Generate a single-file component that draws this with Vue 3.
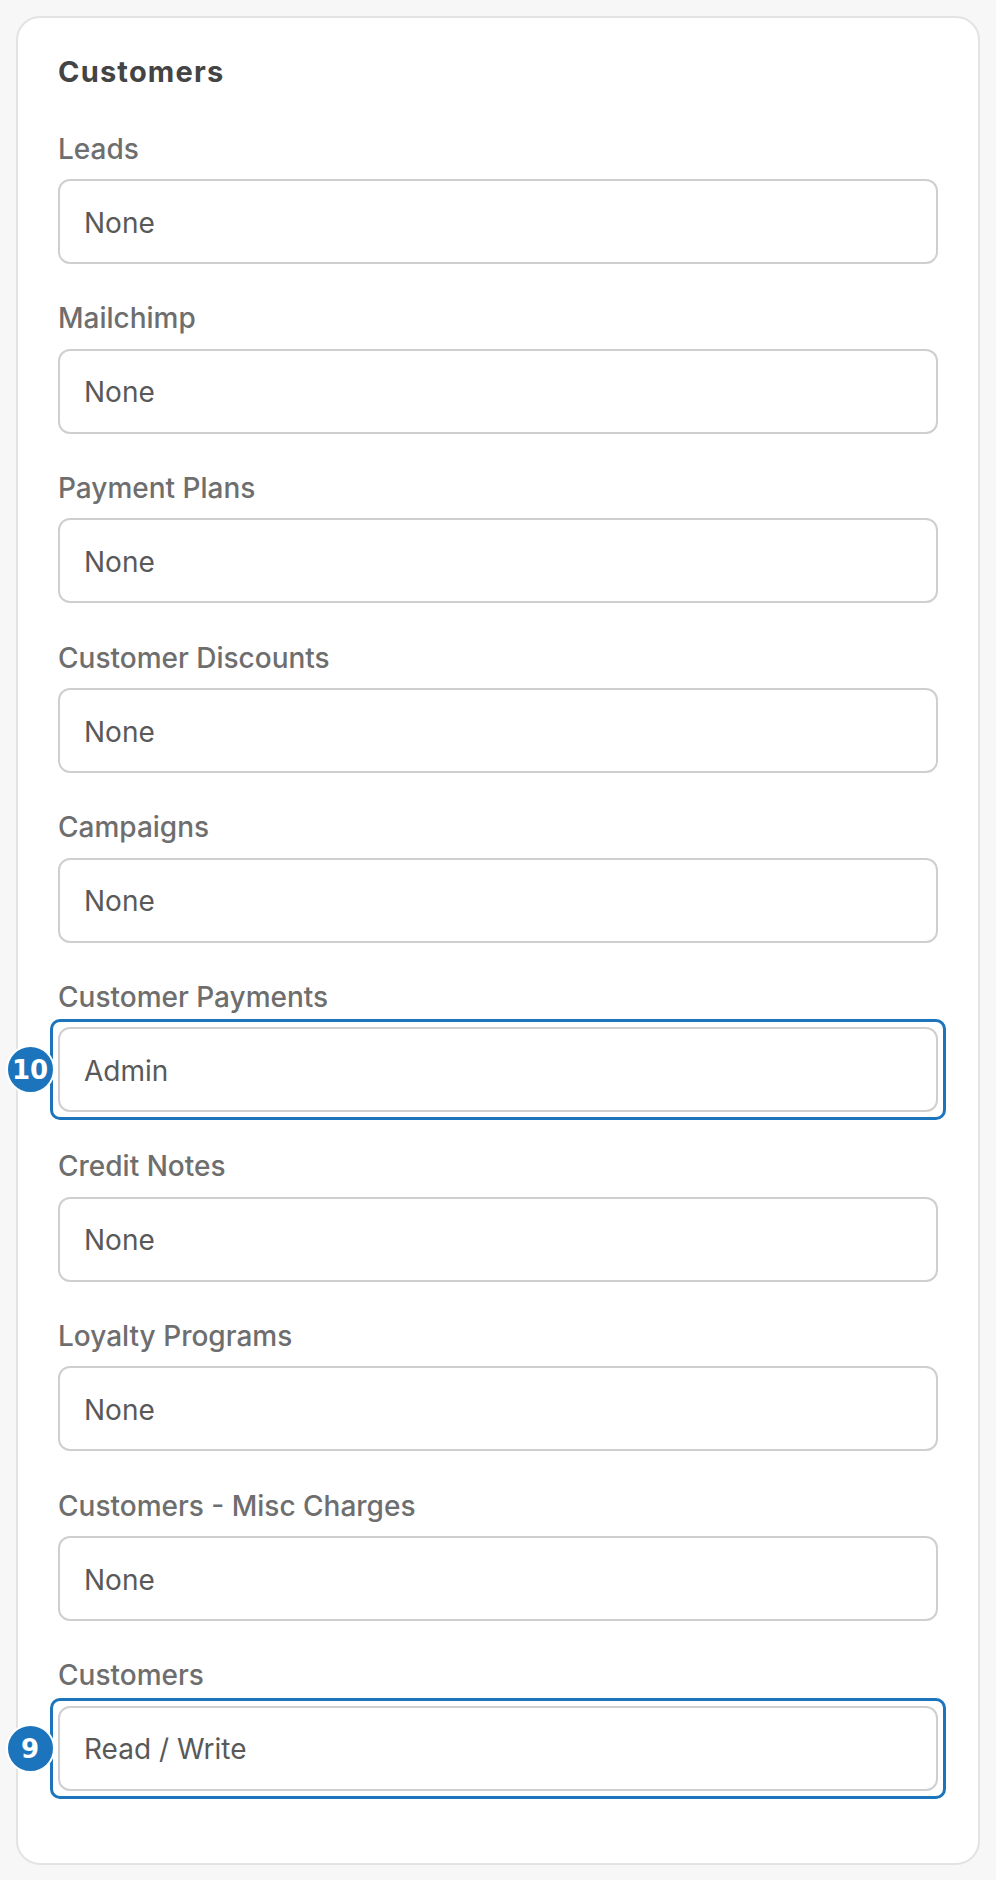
<script setup>
const fields = [
  { label: 'Leads', value: 'None' },
  { label: 'Mailchimp', value: 'None' },
  { label: 'Payment Plans', value: 'None' },
  { label: 'Customer Discounts', value: 'None' },
  { label: 'Campaigns', value: 'None' },
  { label: 'Customer Payments', value: 'Admin', badge: 10 },
  { label: 'Credit Notes', value: 'None' },
  { label: 'Loyalty Programs', value: 'None' },
  { label: 'Customers - Misc Charges', value: 'None' },
  { label: 'Customers', value: 'Read / Write', badge: 9 },
];
</script>

<template>
  <div class="page">
    <section class="card">
      <h2 class="card-title">Customers</h2>
      <div class="fields">
        <div v-for="field in fields" :key="field.label" class="field">
          <label class="field-label">{{ field.label }}</label>
          <div class="select-wrap" :class="{ 'select-wrap--marked': field.badge }">
            <div class="select">{{ field.value }}</div>
            <span v-if="field.badge" class="badge">{{ field.badge }}</span>
          </div>
        </div>
      </div>
    </section>
  </div>
</template>

<style>
html,
body {
  margin: 0;
  background: #f7f7f7;
}
</style>

<style scoped>
.page {
  box-sizing: border-box;
  width: 996px;
  height: 1880px;
  padding: 16px;
  background: #f7f7f7;
  font-family: Inter, "Noto Sans", sans-serif;
}

.card {
  box-sizing: border-box;
  height: 1849px;
  padding: 36px 40px 0;
  background: #fff;
  border: 2px solid #e3e3e3;
  border-radius: 24px;
}

.card-title {
  margin: 0 0 39.9px;
  font-size: 29px;
  line-height: 35px;
  padding-bottom: 1px;
  font-weight: 700;
  letter-spacing: 1.2px;
  color: #444;
}

.fields {
  display: flex;
  flex-direction: column;
  gap: 35.2px;
}

.field-label {
  display: block;
  margin-bottom: 11px;
  font-size: 28px;
  line-height: 38.4px;
  font-weight: 500;
  color: #6e6e6e;
}

.select-wrap {
  position: relative;
}

.select-wrap--marked::after {
  content: '';
  position: absolute;
  inset: -8px;
  border: 3px solid #1c75bc;
  border-radius: 10px;
  pointer-events: none;
}

.select {
  box-sizing: border-box;
  height: 85px;
  padding: 2px 24px 0;
  display: flex;
  align-items: center;
  font-size: 28px;
  color: #595959;
  background: #fff;
  border: 2px solid #cfcfcf;
  border-radius: 12px;
}

.badge {
  position: absolute;
  z-index: 1;
  left: -52.5px;
  top: 50%;
  box-sizing: border-box;
  width: 49px;
  height: 49px;
  margin-top: -24.5px;
  padding-top: 1px;
  display: flex;
  align-items: center;
  justify-content: center;
  font-family: "DejaVu Sans", sans-serif;
  font-size: 26px;
  font-weight: 700;
  color: #fff;
  background: #1c75bc;
  border: 2px solid #fff;
  border-radius: 50%;
}
</style>
